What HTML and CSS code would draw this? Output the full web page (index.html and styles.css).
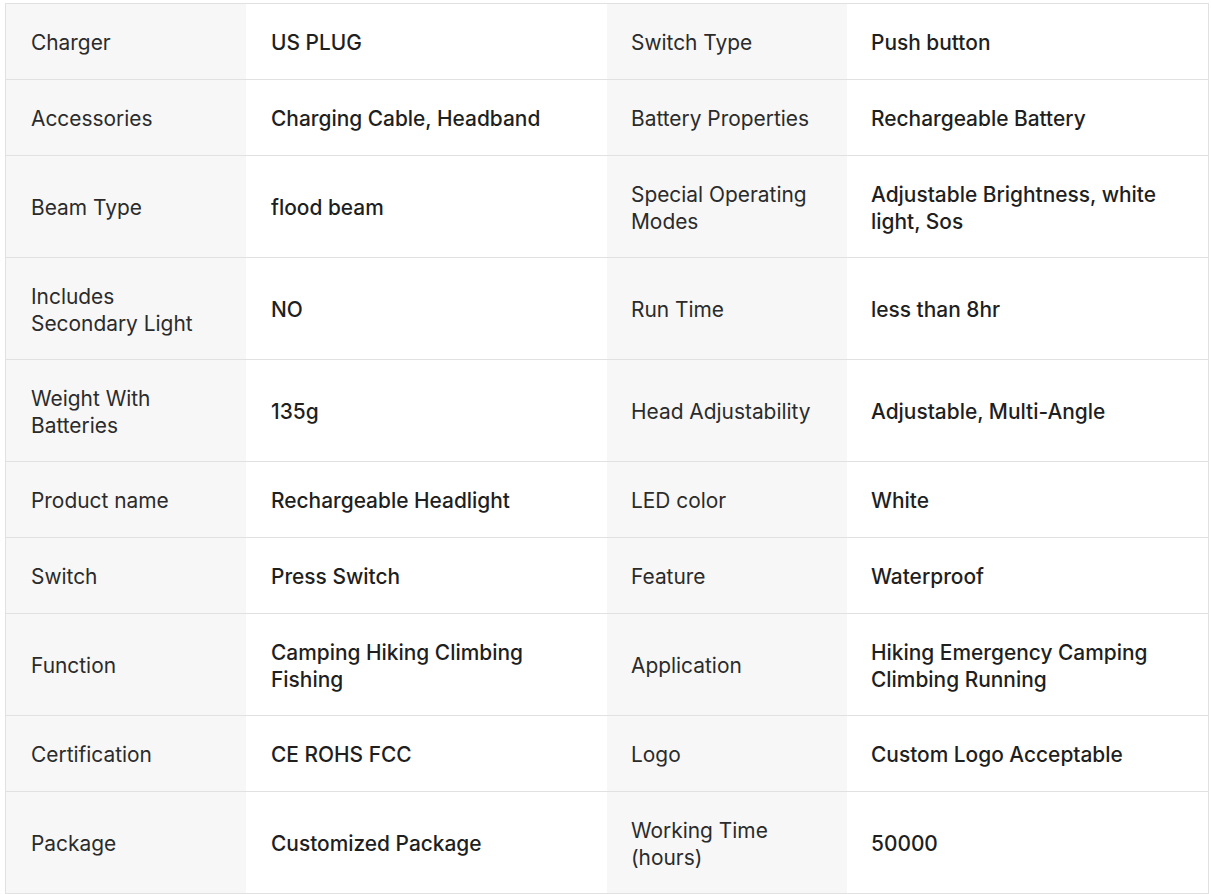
FILE: index.html
```html
<!DOCTYPE html>
<html lang="en">
<head>
<meta charset="utf-8">
<title>Specifications</title>
<link rel="stylesheet" href="styles.css">
</head>
<body>
<div class="wrap">
<table class="specs">
<colgroup>
<col class="c-label"><col class="c-value"><col class="c-label"><col class="c-value">
</colgroup>
<tbody>
<tr><td class="k">Charger</td><td class="v">US PLUG</td><td class="k">Switch Type</td><td class="v">Push button</td></tr>
<tr><td class="k">Accessories</td><td class="v">Charging Cable, Headband</td><td class="k">Battery Properties</td><td class="v">Rechargeable Battery</td></tr>
<tr><td class="k">Beam Type</td><td class="v">flood beam</td><td class="k">Special Operating Modes</td><td class="v">Adjustable Brightness, white light, Sos</td></tr>
<tr><td class="k">Includes Secondary Light</td><td class="v">NO</td><td class="k">Run Time</td><td class="v">less than 8hr</td></tr>
<tr><td class="k">Weight With Batteries</td><td class="v">135g</td><td class="k">Head Adjustability</td><td class="v">Adjustable, Multi-Angle</td></tr>
<tr><td class="k">Product name</td><td class="v">Rechargeable Headlight</td><td class="k">LED color</td><td class="v">White</td></tr>
<tr><td class="k">Switch</td><td class="v">Press Switch</td><td class="k">Feature</td><td class="v">Waterproof</td></tr>
<tr><td class="k">Function</td><td class="v">Camping Hiking Climbing Fishing</td><td class="k">Application</td><td class="v">Hiking Emergency Camping Climbing Running</td></tr>
<tr><td class="k">Certification</td><td class="v">CE ROHS FCC</td><td class="k">Logo</td><td class="v">Custom Logo Acceptable</td></tr>
<tr><td class="k">Package</td><td class="v">Customized Package</td><td class="k">Working Time (hours)</td><td class="v">50000</td></tr>
</tbody>
</table>
</div>
</body>
</html>
```
FILE: styles.css
```css
html, body {
  margin: 0;
  padding: 0;
  background: #ffffff;
}
.wrap {
  padding: 3px 0 0 5px;
}
.specs {
  width: 1204px;
  table-layout: fixed;
  border-collapse: separate;
  border-spacing: 0;
  border: 1px solid #e1e1e1;
  border-bottom: none;
  font-family: Inter, "Noto Sans", sans-serif;
  font-size: 20.9px;
  line-height: 27px;
}
.c-label { width: 240px; }
.c-value { width: 361px; }
.specs tr {
  height: 76px;
}
.specs td {
  border-bottom: 1px solid #e1e1e1;
  padding: 24.5px 24px 22.5px 25px;
  vertical-align: middle;
}
.specs td.k {
  background: #f7f7f7;
  color: #2b2b2b;
  font-weight: 400;
}
.specs td.v {
  background: #ffffff;
  color: #1f1f1f;
  font-weight: 500;
}
.specs td:nth-child(3),
.specs td:nth-child(4) {
  padding-left: 24px;
}
```
